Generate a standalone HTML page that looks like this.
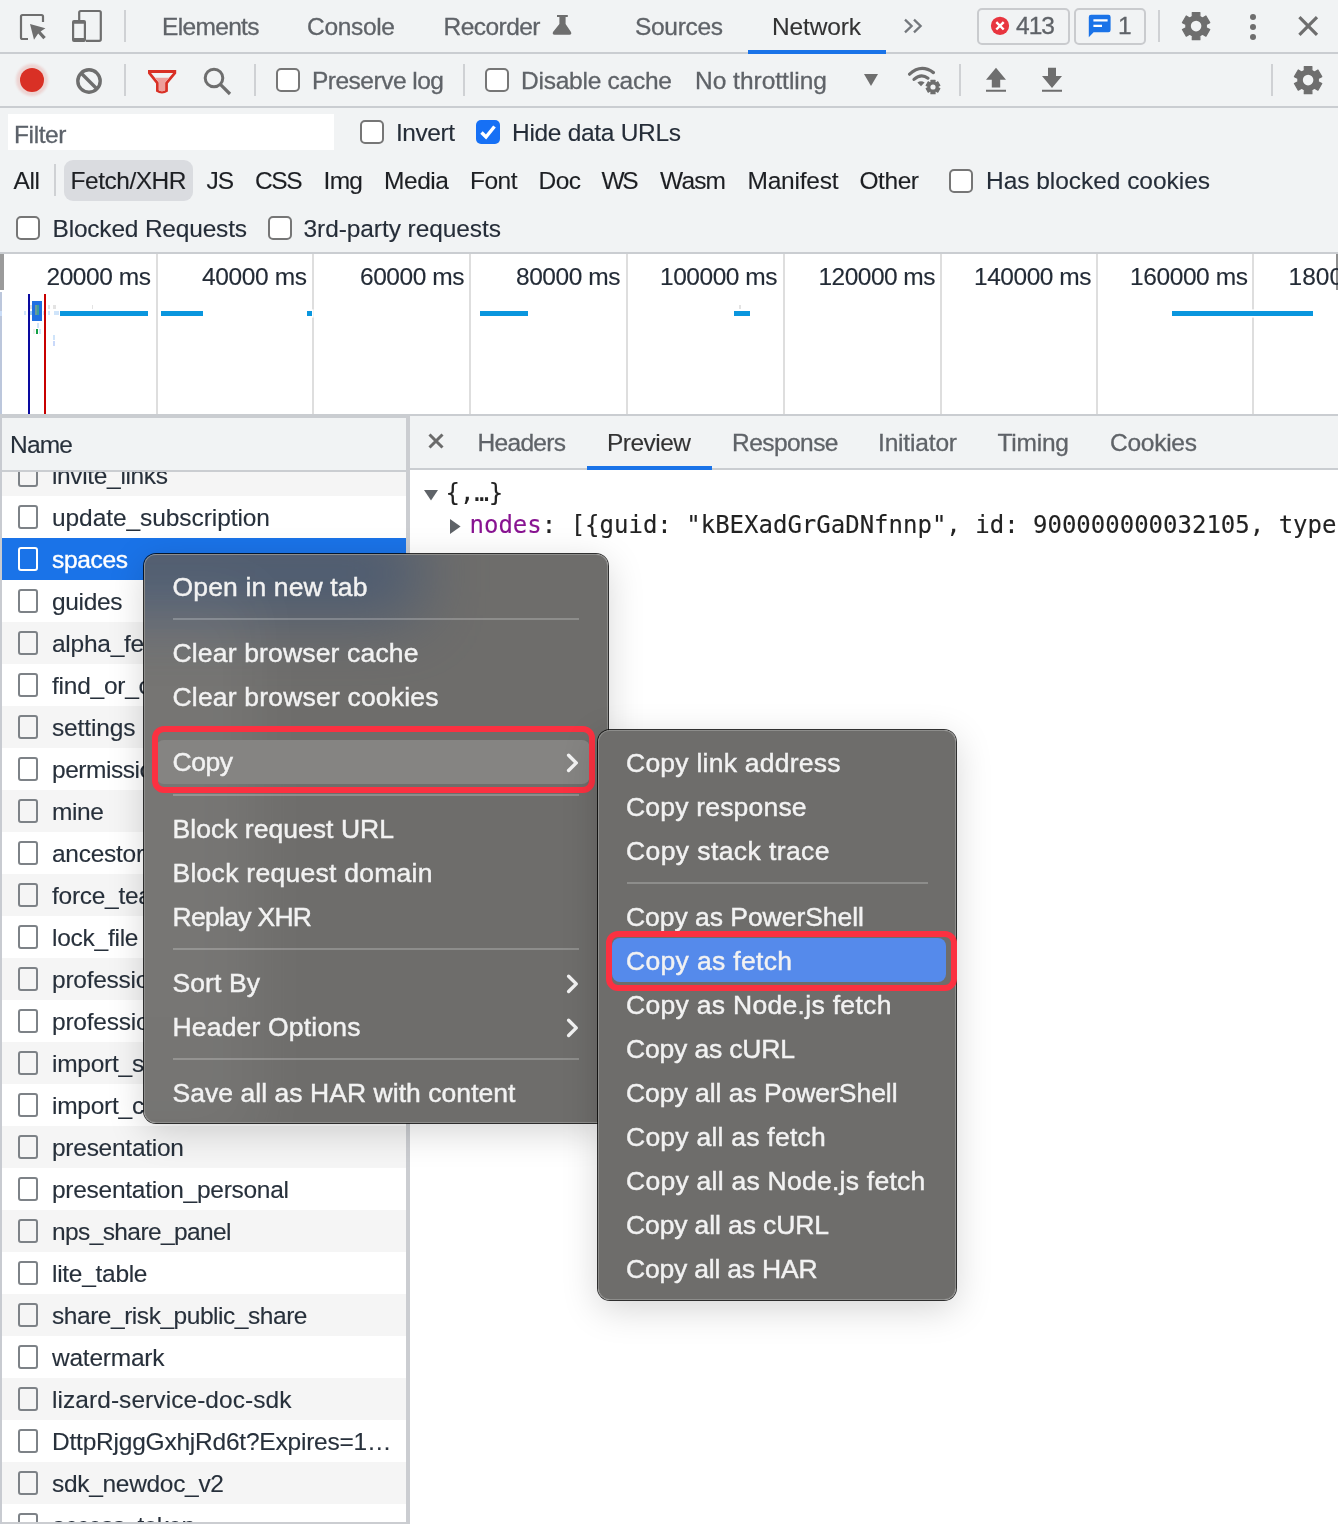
<!DOCTYPE html>
<html lang="en"><head><meta charset="utf-8"><title>DevTools - Network</title>
<style>
html,body{margin:0;padding:0}
body{width:1338px;height:1524px;position:relative;overflow:hidden;background:#fff;font-family:"Liberation Sans", sans-serif;}
#root{position:absolute;left:0;top:0;width:1338px;height:1524px;overflow:hidden;will-change:transform}
#root div,#root span,#root svg{position:absolute;box-sizing:border-box}
#root span{white-space:pre;line-height:1;-webkit-text-stroke:0.3px currentColor}
.m{font-family:"DejaVu Sans Mono", "Liberation Mono", monospace}
</style></head><body><div id="root">
<div style="left:0px;top:0px;width:1338px;height:254px;background:#f1f3f4;"></div>
<div style="left:0px;top:52px;width:1338px;height:2px;background:#cacdd1;"></div>
<div style="left:0px;top:106px;width:1338px;height:2px;background:#cacdd1;"></div>
<div style="left:0px;top:252px;width:1338px;height:2px;background:#cacdd1;"></div>
<div style="left:748px;top:50px;width:138px;height:4px;background:#1a73e8;"></div>
<div style="left:124px;top:10px;width:2px;height:32px;background:#cfd1d4;"></div>
<div style="left:1158px;top:10px;width:2px;height:32px;background:#cfd1d4;"></div>
<div style="left:124px;top:64px;width:2px;height:32px;background:#cfd1d4;"></div>
<div style="left:254px;top:64px;width:2px;height:32px;background:#cfd1d4;"></div>
<div style="left:463px;top:64px;width:2px;height:32px;background:#cfd1d4;"></div>
<div style="left:958.6px;top:64px;width:2px;height:32px;background:#cfd1d4;"></div>
<div style="left:1270.6px;top:64px;width:2px;height:32px;background:#cfd1d4;"></div>
<div style="left:8px;top:114px;width:326px;height:36px;background:#fff;"></div>
<div style="left:54px;top:164px;width:2px;height:32px;background:#cfd1d4;"></div>
<div style="left:64px;top:160px;width:128.8px;height:40.6px;background:#dadce0;border-radius:9px;"></div>
<div style="left:276px;top:68px;width:24px;height:24px;background:#fff;border:2px solid #767676;border-radius:5px;"></div>
<div style="left:484.6px;top:68px;width:24px;height:24px;background:#fff;border:2px solid #767676;border-radius:5px;"></div>
<div style="left:360px;top:120px;width:24px;height:24px;background:#fff;border:2px solid #767676;border-radius:5px;"></div>
<div style="left:949px;top:169px;width:24px;height:24px;background:#fff;border:2px solid #767676;border-radius:5px;"></div>
<div style="left:16px;top:216px;width:24px;height:24px;background:#fff;border:2px solid #767676;border-radius:5px;"></div>
<div style="left:268px;top:216px;width:24px;height:24px;background:#fff;border:2px solid #767676;border-radius:5px;"></div>
<div style="left:476px;top:120px;width:24px;height:24px;background:#1670f5;border-radius:5px;"></div>
<svg style="left:476px;top:120px" width="24" height="24" viewBox="0 0 24 24"><path d="M5.5 12.5 L10 17 L18.5 6.5" fill="none" stroke="#fff" stroke-width="3.4" stroke-linecap="butt" stroke-linejoin="miter"/></svg>
<div style="left:0px;top:254px;width:1338px;height:160px;background:#fff;"></div>
<div style="left:0px;top:414px;width:1338px;height:2px;background:#cacdd1;"></div>
<div style="left:155.5px;top:254px;width:2px;height:160px;background:#dedede;"></div>
<div style="left:312px;top:254px;width:2px;height:160px;background:#dedede;"></div>
<div style="left:469px;top:254px;width:2px;height:160px;background:#dedede;"></div>
<div style="left:625.5px;top:254px;width:2px;height:160px;background:#dedede;"></div>
<div style="left:782.5px;top:254px;width:2px;height:160px;background:#dedede;"></div>
<div style="left:939.5px;top:254px;width:2px;height:160px;background:#dedede;"></div>
<div style="left:1096px;top:254px;width:2px;height:160px;background:#dedede;"></div>
<div style="left:1252px;top:254px;width:2px;height:160px;background:#dedede;"></div>
<div style="left:1334px;top:254px;width:4px;height:60px;background:#fff;"></div>
<div style="left:1336px;top:254px;width:2px;height:36px;background:#8f8f8f;"></div>
<div style="left:0px;top:254px;width:4px;height:35.6px;background:#9b9b9b;"></div>
<div style="left:60px;top:310.5px;width:87.5px;height:5px;background:#0a96de;box-shadow:0 0 0 1.6px #fff;"></div>
<div style="left:161px;top:310.5px;width:41.5px;height:5px;background:#0a96de;box-shadow:0 0 0 1.6px #fff;"></div>
<div style="left:307px;top:310.5px;width:5px;height:5px;background:#0a96de;box-shadow:0 0 0 1.6px #fff;"></div>
<div style="left:480px;top:310.5px;width:47.5px;height:5px;background:#0a96de;box-shadow:0 0 0 1.6px #fff;"></div>
<div style="left:734px;top:310.5px;width:16px;height:5px;background:#0a96de;box-shadow:0 0 0 1.6px #fff;"></div>
<div style="left:1171.5px;top:310.5px;width:141.5px;height:5px;background:#0a96de;box-shadow:0 0 0 1.6px #fff;"></div>
<div style="left:0px;top:292px;width:2px;height:122px;background:#bcc7dc;"></div>
<div style="left:0px;top:311px;width:2px;height:4.5px;background:#c9dcf7;"></div>
<div style="left:32px;top:301px;width:10.2px;height:19.8px;background:#1f70e2;"></div>
<div style="left:35.4px;top:305px;width:1.2px;height:10px;background:#6a9a9c;"></div>
<div style="left:37px;top:305px;width:2px;height:10px;background:#3c9f9a;"></div>
<div style="left:24.2px;top:310.8px;width:2px;height:4.5px;background:#cfe4fa;"></div>
<div style="left:30.2px;top:310.8px;width:1.5px;height:4.5px;background:#9fd0f5;"></div>
<div style="left:42.5px;top:310.8px;width:1.5px;height:4.5px;background:#cfe4fa;"></div>
<div style="left:48px;top:310.8px;width:2px;height:4.5px;background:#cfe4fa;"></div>
<div style="left:54px;top:310.8px;width:1.6px;height:4.5px;background:#cfe4fa;"></div>
<div style="left:56.2px;top:310.8px;width:1.6px;height:4.5px;background:#cfe4fa;"></div>
<div style="left:58.2px;top:310.8px;width:1.2px;height:4.5px;background:#cfe4fa;"></div>
<div style="left:30px;top:304.5px;width:1.6px;height:4.5px;background:#e3e3e3;"></div>
<div style="left:48.4px;top:304.5px;width:1.6px;height:4.5px;background:#e3e3e3;"></div>
<div style="left:52.6px;top:304.5px;width:1.2px;height:4.5px;background:#e3e3e3;"></div>
<div style="left:54.2px;top:304.5px;width:1.4px;height:4.5px;background:#e3e3e3;"></div>
<div style="left:91.6px;top:304.5px;width:1.6px;height:4.5px;background:#e3e3e3;"></div>
<div style="left:37.2px;top:322.5px;width:2.2px;height:5.5px;background:#cfe4fa;"></div>
<div style="left:33.2px;top:329px;width:1.6px;height:4.5px;background:#eeeeee;"></div>
<div style="left:35.8px;top:329px;width:2.4px;height:4.5px;background:#12a043;"></div>
<div style="left:38.8px;top:329px;width:1.8px;height:4.5px;background:#cfe4fa;"></div>
<div style="left:53px;top:334.5px;width:2.4px;height:5px;background:#cfe4fa;"></div>
<div style="left:53px;top:340.5px;width:2.4px;height:5px;background:#c9d9fa;"></div>
<div style="left:739.2px;top:304.5px;width:1.4px;height:4.5px;background:#e3e3e3;"></div>
<div style="left:28px;top:294px;width:2px;height:120px;background:#0a0aa0;"></div>
<div style="left:44px;top:294px;width:2px;height:120px;background:#c80000;"></div>
<div style="left:406px;top:416px;width:4px;height:1108px;background:#cbcdd1;"></div>
<div style="left:0px;top:454px;width:406px;height:42px;background:#f5f5f5;"></div>
<div style="left:18px;top:463.3px;width:20px;height:23.5px;border:2px solid #7d8287;border-radius:3px;"></div>
<div style="left:0px;top:496px;width:406px;height:42px;background:#fff;"></div>
<div style="left:18px;top:505.3px;width:20px;height:23.5px;border:2px solid #7d8287;border-radius:3px;"></div>
<div style="left:0px;top:538px;width:406px;height:42px;background:#1a73e8;"></div>
<div style="left:18px;top:547.3px;width:20px;height:23.5px;border:2px solid #fff;border-radius:3px;"></div>
<div style="left:0px;top:580px;width:406px;height:42px;background:#fff;"></div>
<div style="left:18px;top:589.3px;width:20px;height:23.5px;border:2px solid #7d8287;border-radius:3px;"></div>
<div style="left:0px;top:622px;width:406px;height:42px;background:#f5f5f5;"></div>
<div style="left:18px;top:631.3px;width:20px;height:23.5px;border:2px solid #7d8287;border-radius:3px;"></div>
<div style="left:0px;top:664px;width:406px;height:42px;background:#fff;"></div>
<div style="left:18px;top:673.3px;width:20px;height:23.5px;border:2px solid #7d8287;border-radius:3px;"></div>
<div style="left:0px;top:706px;width:406px;height:42px;background:#f5f5f5;"></div>
<div style="left:18px;top:715.3px;width:20px;height:23.5px;border:2px solid #7d8287;border-radius:3px;"></div>
<div style="left:0px;top:748px;width:406px;height:42px;background:#fff;"></div>
<div style="left:18px;top:757.3px;width:20px;height:23.5px;border:2px solid #7d8287;border-radius:3px;"></div>
<div style="left:0px;top:790px;width:406px;height:42px;background:#f5f5f5;"></div>
<div style="left:18px;top:799.3px;width:20px;height:23.5px;border:2px solid #7d8287;border-radius:3px;"></div>
<div style="left:0px;top:832px;width:406px;height:42px;background:#fff;"></div>
<div style="left:18px;top:841.3px;width:20px;height:23.5px;border:2px solid #7d8287;border-radius:3px;"></div>
<div style="left:0px;top:874px;width:406px;height:42px;background:#f5f5f5;"></div>
<div style="left:18px;top:883.3px;width:20px;height:23.5px;border:2px solid #7d8287;border-radius:3px;"></div>
<div style="left:0px;top:916px;width:406px;height:42px;background:#fff;"></div>
<div style="left:18px;top:925.3px;width:20px;height:23.5px;border:2px solid #7d8287;border-radius:3px;"></div>
<div style="left:0px;top:958px;width:406px;height:42px;background:#f5f5f5;"></div>
<div style="left:18px;top:967.3px;width:20px;height:23.5px;border:2px solid #7d8287;border-radius:3px;"></div>
<div style="left:0px;top:1000px;width:406px;height:42px;background:#fff;"></div>
<div style="left:18px;top:1009.3px;width:20px;height:23.5px;border:2px solid #7d8287;border-radius:3px;"></div>
<div style="left:0px;top:1042px;width:406px;height:42px;background:#f5f5f5;"></div>
<div style="left:18px;top:1051.3px;width:20px;height:23.5px;border:2px solid #7d8287;border-radius:3px;"></div>
<div style="left:0px;top:1084px;width:406px;height:42px;background:#fff;"></div>
<div style="left:18px;top:1093.3px;width:20px;height:23.5px;border:2px solid #7d8287;border-radius:3px;"></div>
<div style="left:0px;top:1126px;width:406px;height:42px;background:#f5f5f5;"></div>
<div style="left:18px;top:1135.3px;width:20px;height:23.5px;border:2px solid #7d8287;border-radius:3px;"></div>
<div style="left:0px;top:1168px;width:406px;height:42px;background:#fff;"></div>
<div style="left:18px;top:1177.3px;width:20px;height:23.5px;border:2px solid #7d8287;border-radius:3px;"></div>
<div style="left:0px;top:1210px;width:406px;height:42px;background:#f5f5f5;"></div>
<div style="left:18px;top:1219.3px;width:20px;height:23.5px;border:2px solid #7d8287;border-radius:3px;"></div>
<div style="left:0px;top:1252px;width:406px;height:42px;background:#fff;"></div>
<div style="left:18px;top:1261.3px;width:20px;height:23.5px;border:2px solid #7d8287;border-radius:3px;"></div>
<div style="left:0px;top:1294px;width:406px;height:42px;background:#f5f5f5;"></div>
<div style="left:18px;top:1303.3px;width:20px;height:23.5px;border:2px solid #7d8287;border-radius:3px;"></div>
<div style="left:0px;top:1336px;width:406px;height:42px;background:#fff;"></div>
<div style="left:18px;top:1345.3px;width:20px;height:23.5px;border:2px solid #7d8287;border-radius:3px;"></div>
<div style="left:0px;top:1378px;width:406px;height:42px;background:#f5f5f5;"></div>
<div style="left:18px;top:1387.3px;width:20px;height:23.5px;border:2px solid #7d8287;border-radius:3px;"></div>
<div style="left:0px;top:1420px;width:406px;height:42px;background:#fff;"></div>
<div style="left:18px;top:1429.3px;width:20px;height:23.5px;border:2px solid #7d8287;border-radius:3px;"></div>
<div style="left:0px;top:1462px;width:406px;height:42px;background:#f5f5f5;"></div>
<div style="left:18px;top:1471.3px;width:20px;height:23.5px;border:2px solid #7d8287;border-radius:3px;"></div>
<div style="left:0px;top:1504px;width:406px;height:42px;background:#fff;"></div>
<div style="left:18px;top:1513.3px;width:20px;height:23.5px;border:2px solid #7d8287;border-radius:3px;"></div>
<div style="left:0px;top:418px;width:2px;height:1106px;background:#c8cbd1;z-index:4;"></div>
<div style="left:0px;top:1522px;width:410px;height:2px;background:#cbcdd1;z-index:3;"></div>
<div style="left:0px;top:414px;width:406px;height:4px;background:#cacdd1;z-index:3;"></div>
<div style="left:0px;top:418px;width:406px;height:52px;background:#f1f3f4;z-index:3;"></div>
<div style="left:0px;top:470px;width:406px;height:2px;background:#cacdd1;z-index:3;"></div>
<div style="left:410px;top:416px;width:928px;height:52px;background:#f1f3f4;"></div>
<div style="left:410px;top:468px;width:928px;height:2px;background:#cacdd1;"></div>
<div style="left:410px;top:470px;width:928px;height:1054px;background:#fff;"></div>
<svg style="left:427px;top:432px" width="18" height="18" viewBox="0 0 18 18"><path d="M2.5 2.5 L15.5 15.5 M15.5 2.5 L2.5 15.5" stroke="#6b6b6b" stroke-width="3" fill="none"/></svg>
<div style="left:587px;top:466px;width:125px;height:4px;background:#1a73e8;"></div>
<svg style="left:424px;top:490px" width="14" height="11" viewBox="0 0 14 11"><path d="M0 0 H14 L7 10.6 Z" fill="#5f6368"/></svg>
<svg style="left:450px;top:518.5px" width="11" height="15" viewBox="0 0 11 15"><path d="M0 0 L10.6 7.5 L0 15 Z" fill="#5f6368"/></svg>
<svg style="left:16px;top:10px" width="34" height="34" viewBox="16 10 34 34"><path d="M28 39 H22.5 Q21 39 21 37.5 V16.5 Q21 15 22.5 15 H41.5 Q43 15 43 16.5 V22" fill="none" stroke="#6e6e6e" stroke-width="2.2"/><path d="M30 24 L45.4 28.3 L40.6 31.4 L45.8 37 L43.3 39.3 L38.2 33.6 L34 39.8 Z" fill="#6e6e6e"/></svg>
<svg style="left:70px;top:8px" width="34" height="36" viewBox="70 8 34 36"><path d="M79.2 20 V12.5 Q79.2 11 80.7 11 H99.3 Q100.8 11 100.8 12.5 V39.3 Q100.8 40.8 99.3 40.8 H86" fill="none" stroke="#6e6e6e" stroke-width="2.2"/><path d="M74 20 H84 Q86 20 86 22 V40 Q86 42 84 42 H74 Q72 42 72 40 V22 Q72 20 74 20 Z M74.2 23.8 V38 H83.8 V23.8 Z" fill="#6e6e6e" fill-rule="evenodd"/></svg>
<div style="left:16px;top:64px;width:32px;height:32px;border-radius:50%;background:rgba(217,48,37,0.16);filter:blur(1.2px)"></div>
<div style="left:20px;top:68px;width:24px;height:24px;border-radius:50%;background:#d93025"></div>
<svg style="left:74px;top:66px" width="30" height="30" viewBox="74 66 30 30"><circle cx="89" cy="81" r="11.2" fill="none" stroke="#6e6e6e" stroke-width="3.4"/><path d="M81 73 L97 89" stroke="#6e6e6e" stroke-width="3.4"/></svg>
<svg style="left:146px;top:68px" width="32" height="28" viewBox="146 68 32 28"><path d="M148 70 H176.2 V73.5 L167.9 83.5 V91.5 Q162 95.6 156 91.5 V83.5 L148 73.5 Z" fill="#d93025"/><path d="M151.1 72.9 H173.1 L165.1 82.5 V90.3 Q162 92 158.8 90.3 V82.5 Z" fill="#f1f3f4"/><path d="M155 77.8 H169.2 L165.1 82.5 V90.3 Q162 92 158.8 90.3 V82.5 Z" fill="#ee9f9b"/></svg>
<svg style="left:200px;top:64px" width="34" height="34" viewBox="200 64 34 34"><circle cx="214" cy="78" r="8.8" fill="none" stroke="#6e6e6e" stroke-width="3"/><path d="M220.6 84.6 L230 94" stroke="#6e6e6e" stroke-width="3.2"/></svg>
<svg style="left:550px;top:12px" width="24" height="26" viewBox="550 12 24 26"><path d="M557 15 H567.8 V17 H565.6 V24 L571 32 Q572 34.8 569.5 34.8 H554.5 Q552 34.8 553 32 L559.4 24 V17 H557 Z" fill="#6e6e6e"/></svg>
<svg style="left:900px;top:14px" width="26" height="24" viewBox="900 14 26 24"><path d="M905 19.6 L911.6 26 L905 32.4 M914 19.6 L920.6 26 L914 32.4" fill="none" stroke="#73777c" stroke-width="2.3"/></svg>
<div style="left:977px;top:8px;width:92.5px;height:36.5px;border:2px solid #c9cbce;border-radius:5px;"></div>
<svg style="left:990px;top:16px" width="20" height="20" viewBox="990 16 20 20"><circle cx="1000" cy="25.8" r="9.1" fill="#e8353f"/><path d="M996.3 22.1 L1003.7 29.5 M1003.7 22.1 L996.3 29.5" stroke="#fff" stroke-width="2.4"/></svg>
<div style="left:1074.3px;top:8px;width:71.7px;height:36.5px;border:2px solid #c9cbce;border-radius:5px;"></div>
<svg style="left:1086px;top:12px" width="28" height="28" viewBox="1086 12 28 28"><path d="M1091 14.7 H1108.4 Q1110.6 14.7 1110.6 16.9 V30.1 Q1110.6 32.3 1108.4 32.3 H1093.6 L1088.8 37.3 V16.9 Q1088.8 14.7 1091 14.7 Z" fill="#1a73e8"/><path d="M1093.4 20.3 H1107.6 M1093.4 25.8 H1102" stroke="#fff" stroke-width="2.2"/></svg>
<svg style="left:1179.9px;top:9.9px" width="32.2" height="32.2" viewBox="1179.90 9.90 32.20 32.20"><circle cx="1196" cy="26" r="10.3" fill="#6e6e6e"/><path d="M1192.26 16.40 L1192.17 12.43 L1199.83 12.43 L1199.74 16.40 L1202.44 17.96 L1205.84 15.90 L1209.67 22.53 L1206.18 24.44 L1206.18 27.56 L1209.67 29.47 L1205.84 36.10 L1202.44 34.04 L1199.74 35.60 L1199.83 39.57 L1192.17 39.57 L1192.26 35.60 L1189.56 34.04 L1186.16 36.10 L1182.33 29.47 L1185.82 27.56 L1185.82 24.44 L1182.33 22.53 L1186.16 15.90 L1189.56 17.96 Z M1201.30 26.00 A5.3 5.3 0 1 0 1190.70 26.00 A5.3 5.3 0 1 0 1201.30 26.00 Z" fill="#6e6e6e" fill-rule="evenodd" stroke="#6e6e6e" stroke-width="1.2" stroke-linejoin="round"/><circle cx="1196" cy="26" r="5.3" fill="#f1f3f4"/></svg>
<svg style="left:1291.9px;top:63.9px" width="32.2" height="32.2" viewBox="1291.90 63.90 32.20 32.20"><circle cx="1308" cy="80" r="10.3" fill="#6e6e6e"/><path d="M1304.26 70.40 L1304.17 66.43 L1311.83 66.43 L1311.74 70.40 L1314.44 71.96 L1317.84 69.90 L1321.67 76.53 L1318.18 78.44 L1318.18 81.56 L1321.67 83.47 L1317.84 90.10 L1314.44 88.04 L1311.74 89.60 L1311.83 93.57 L1304.17 93.57 L1304.26 89.60 L1301.56 88.04 L1298.16 90.10 L1294.33 83.47 L1297.82 81.56 L1297.82 78.44 L1294.33 76.53 L1298.16 69.90 L1301.56 71.96 Z M1313.30 80.00 A5.3 5.3 0 1 0 1302.70 80.00 A5.3 5.3 0 1 0 1313.30 80.00 Z" fill="#6e6e6e" fill-rule="evenodd" stroke="#6e6e6e" stroke-width="1.2" stroke-linejoin="round"/><circle cx="1308" cy="80" r="5.3" fill="#f1f3f4"/></svg>
<div style="left:1250px;top:14px;width:6px;height:6px;border-radius:50%;background:#6e6e6e"></div>
<div style="left:1250px;top:24px;width:6px;height:6px;border-radius:50%;background:#6e6e6e"></div>
<div style="left:1250px;top:34px;width:6px;height:6px;border-radius:50%;background:#6e6e6e"></div>
<svg style="left:1296px;top:14px" width="24" height="24" viewBox="1296 14 24 24"><path d="M1299.4 17.2 L1317 34.8 M1317 17.2 L1299.4 34.8" stroke="#6e6e6e" stroke-width="3.2" fill="none"/></svg>
<svg style="left:862px;top:72px" width="18" height="16" viewBox="862 72 18 16"><path d="M864 74 H878 L871 86 Z" fill="#6e6e6e"/></svg>
<svg style="left:904px;top:62px" width="40" height="36" viewBox="904 62 40 36"><path d="M909.6 74.2 Q921 63.6 933.4 72.6" fill="none" stroke="#6e6e6e" stroke-width="3.2" stroke-linecap="round"/><path d="M914 79.4 Q921 73.2 928 78.2" fill="none" stroke="#6e6e6e" stroke-width="3.2" stroke-linecap="round"/><path d="M917.4 82.6 Q921 80 924.6 82.6 L921 86.2 Z" fill="#6e6e6e"/></svg>
<div style="left:924.6px;top:77.9px;width:17.6px;height:17.6px;border-radius:50%;background:#f1f3f4"></div>
<svg style="left:924.4px;top:77.7px" width="18" height="18" viewBox="924.40 77.70 18.00 18.00"><circle cx="933.4" cy="86.7" r="5.0" fill="#6e6e6e"/><path d="M931.43 82.10 L931.33 80.01 L935.47 80.01 L935.37 82.10 L936.39 82.70 L938.16 81.56 L940.23 85.15 L938.36 86.11 L938.36 87.29 L940.23 88.25 L938.16 91.84 L936.39 90.70 L935.37 91.30 L935.47 93.39 L931.33 93.39 L931.43 91.30 L930.41 90.70 L928.64 91.84 L926.57 88.25 L928.44 87.29 L928.44 86.11 L926.57 85.15 L928.64 81.56 L930.41 82.70 Z M936.00 86.70 A2.6 2.6 0 1 0 930.80 86.70 A2.6 2.6 0 1 0 936.00 86.70 Z" fill="#6e6e6e" fill-rule="evenodd" stroke="#6e6e6e" stroke-width="1.2" stroke-linejoin="round"/><circle cx="933.4" cy="86.7" r="2.6" fill="#f1f3f4"/></svg>
<svg style="left:984px;top:64px" width="24" height="30" viewBox="984 64 24 30"><path d="M996 67.8 L1006 79.8 H1000.2 V87.5 H991.8 V79.8 H986 Z M986 89.8 H1006 V91.8 H986 Z" fill="#6e6e6e"/></svg>
<svg style="left:1040px;top:64px" width="24" height="30" viewBox="1040 64 24 30"><path d="M1048 67.8 H1056 V76 H1062 L1052 88 L1042 76 H1048 Z M1042 89.8 H1062 V91.8 H1042 Z" fill="#6e6e6e"/></svg>
<div style="left:144px;top:554px;width:463.5px;height:569px;border-radius:12px;z-index:10;box-shadow:0 0 0 1px rgba(0,0,0,0.8), 0 9px 36px rgba(0,0,0,0.17);"></div>
<div style="left:144px;top:554px;width:463.5px;height:569px;border-radius:12px;z-index:10;background:#6e6d6b;overflow:hidden;border:1px solid rgba(255,255,255,0.22);"><div style="left:-150px;top:-24px;width:424px;height:84px;background:#2f4c78;filter:blur(32px);opacity:0.55"></div><div style="left:-150px;top:30px;width:262px;height:560px;background:#fff;filter:blur(30px);opacity:0.06"></div></div>
<div style="left:156px;top:739.8px;width:434px;height:44.4px;background:#858482;z-index:11;border-radius:8px;"></div>
<div style="left:172.5px;top:618px;width:406.5px;height:2px;background:rgba(255,255,255,0.22);z-index:11;"></div>
<div style="left:172.5px;top:727px;width:406.5px;height:2px;background:rgba(255,255,255,0.22);z-index:11;"></div>
<div style="left:172.5px;top:794px;width:406.5px;height:2px;background:rgba(255,255,255,0.22);z-index:11;"></div>
<div style="left:172.5px;top:948px;width:406.5px;height:2px;background:rgba(255,255,255,0.22);z-index:11;"></div>
<div style="left:172.5px;top:1058px;width:406.5px;height:2px;background:rgba(255,255,255,0.22);z-index:11;"></div>
<svg style="left:564px;top:751px;z-index:12" width="16" height="22" viewBox="0 0 16 22"><path d="M4.6 4.3 L12.3 11.9 L4.6 19.5" fill="none" stroke="#f2f2f2" stroke-width="3.4" stroke-linecap="round" stroke-linejoin="round"/></svg>
<svg style="left:564px;top:972px;z-index:12" width="16" height="22" viewBox="0 0 16 22"><path d="M4.6 4.3 L12.3 11.9 L4.6 19.5" fill="none" stroke="#f2f2f2" stroke-width="3.4" stroke-linecap="round" stroke-linejoin="round"/></svg>
<svg style="left:564px;top:1016px;z-index:12" width="16" height="22" viewBox="0 0 16 22"><path d="M4.6 4.3 L12.3 11.9 L4.6 19.5" fill="none" stroke="#f2f2f2" stroke-width="3.4" stroke-linecap="round" stroke-linejoin="round"/></svg>
<div style="left:151.5px;top:726px;width:443.5px;height:67.4px;border:6px solid #fb3141;border-radius:12px;z-index:13;"></div>
<div style="left:598px;top:730px;width:357.8px;height:570px;border-radius:12px;z-index:20;box-shadow:0 0 0 1px rgba(0,0,0,0.8), 0 9px 36px rgba(0,0,0,0.17);"></div>
<div style="left:598px;top:730px;width:357.8px;height:570px;border-radius:12px;z-index:20;background:#6e6d6b;overflow:hidden;border:1px solid rgba(255,255,255,0.22);"></div>
<div style="left:611.5px;top:937.8px;width:334.8px;height:44.3px;background:#558aeb;z-index:21;border-radius:8px;"></div>
<div style="left:626.5px;top:881.5px;width:301.5px;height:2px;background:rgba(255,255,255,0.22);z-index:21;"></div>
<div style="left:605.9px;top:930.9px;width:350.7px;height:60.2px;border:6px solid #fb3141;border-radius:12px;z-index:23;"></div>
<span style="left:162px;top:15px;font-size:24.5px;color:#5f6368;letter-spacing:-0.663px;">Elements</span>
<span style="left:307px;top:15px;font-size:24.5px;color:#5f6368;letter-spacing:-0.315px;">Console</span>
<span style="left:443.5px;top:15px;font-size:24.5px;color:#5f6368;letter-spacing:-0.538px;">Recorder</span>
<span style="left:635px;top:15px;font-size:24.5px;color:#5f6368;letter-spacing:-0.315px;">Sources</span>
<span style="left:772px;top:15px;font-size:24.5px;color:#333;letter-spacing:-0.143px;-webkit-text-stroke-width:0.12px;">Network</span>
<span style="left:312px;top:69px;font-size:24.5px;color:#5f6368;letter-spacing:-0.504px;">Preserve log</span>
<span style="left:521px;top:69px;font-size:24.5px;color:#5f6368;letter-spacing:-0.241px;">Disable cache</span>
<span style="left:695px;top:69px;font-size:24.5px;color:#5f6368;letter-spacing:-0.009px;">No throttling</span>
<span style="left:14px;top:123px;font-size:24.5px;color:#5c626a;letter-spacing:-0.391px;">Filter</span>
<span style="left:396px;top:121px;font-size:24.5px;color:#252d38;letter-spacing:-0.456px;-webkit-text-stroke-width:0.12px;">Invert</span>
<span style="left:512px;top:121px;font-size:24.5px;color:#252d38;letter-spacing:-0.304px;-webkit-text-stroke-width:0.12px;">Hide data URLs</span>
<span style="left:13.5px;top:169px;font-size:24.5px;color:#1d1f23;letter-spacing:-0.367px;-webkit-text-stroke-width:0.12px;">All</span>
<span style="left:70.5px;top:169px;font-size:24.5px;color:#1d1f23;letter-spacing:-0.477px;-webkit-text-stroke-width:0.12px;">Fetch/XHR</span>
<span style="left:206.5px;top:169px;font-size:24.5px;color:#1d1f23;letter-spacing:-1.094px;-webkit-text-stroke-width:0.12px;">JS</span>
<span style="left:255px;top:169px;font-size:24.5px;color:#1d1f23;letter-spacing:-1.445px;-webkit-text-stroke-width:0.12px;">CSS</span>
<span style="left:323.5px;top:169px;font-size:24.5px;color:#1d1f23;letter-spacing:-0.672px;-webkit-text-stroke-width:0.12px;">Img</span>
<span style="left:384px;top:169px;font-size:24.5px;color:#1d1f23;letter-spacing:-0.434px;-webkit-text-stroke-width:0.12px;">Media</span>
<span style="left:470px;top:169px;font-size:24.5px;color:#1d1f23;letter-spacing:-0.510px;-webkit-text-stroke-width:0.12px;">Font</span>
<span style="left:538.5px;top:169px;font-size:24.5px;color:#1d1f23;letter-spacing:-0.539px;-webkit-text-stroke-width:0.12px;">Doc</span>
<span style="left:601.5px;top:169px;font-size:24.5px;color:#1d1f23;letter-spacing:-2.469px;-webkit-text-stroke-width:0.12px;">WS</span>
<span style="left:660px;top:169px;font-size:24.5px;color:#1d1f23;letter-spacing:-0.833px;-webkit-text-stroke-width:0.12px;">Wasm</span>
<span style="left:747.5px;top:169px;font-size:24.5px;color:#1d1f23;letter-spacing:-0.228px;-webkit-text-stroke-width:0.12px;">Manifest</span>
<span style="left:859.5px;top:169px;font-size:24.5px;color:#1d1f23;letter-spacing:-0.445px;-webkit-text-stroke-width:0.12px;">Other</span>
<span style="left:986px;top:169px;font-size:24.5px;color:#252d38;letter-spacing:-0.039px;-webkit-text-stroke-width:0.12px;">Has blocked cookies</span>
<span style="left:52.5px;top:217px;font-size:24.5px;color:#252d38;letter-spacing:-0.199px;-webkit-text-stroke-width:0.12px;">Blocked Requests</span>
<span style="left:303.5px;top:217px;font-size:24.5px;color:#252d38;letter-spacing:-0.077px;-webkit-text-stroke-width:0.12px;">3rd-party requests</span>
<span style="left:46.5px;top:265px;font-size:24.5px;color:#232b36;letter-spacing:-0.444px;-webkit-text-stroke-width:0.12px;">20000 ms</span>
<span style="left:202px;top:265px;font-size:24.5px;color:#232b36;letter-spacing:-0.373px;-webkit-text-stroke-width:0.12px;">40000 ms</span>
<span style="left:360px;top:265px;font-size:24.5px;color:#232b36;letter-spacing:-0.444px;-webkit-text-stroke-width:0.12px;">60000 ms</span>
<span style="left:516px;top:265px;font-size:24.5px;color:#232b36;letter-spacing:-0.444px;-webkit-text-stroke-width:0.12px;">80000 ms</span>
<span style="left:660px;top:265px;font-size:24.5px;color:#232b36;letter-spacing:-0.467px;-webkit-text-stroke-width:0.12px;">100000 ms</span>
<span style="left:818.5px;top:265px;font-size:24.5px;color:#232b36;letter-spacing:-0.529px;-webkit-text-stroke-width:0.12px;">120000 ms</span>
<span style="left:974px;top:265px;font-size:24.5px;color:#232b36;letter-spacing:-0.467px;-webkit-text-stroke-width:0.12px;">140000 ms</span>
<span style="left:1130px;top:265px;font-size:24.5px;color:#232b36;letter-spacing:-0.404px;-webkit-text-stroke-width:0.12px;">160000 ms</span>
<span style="left:1288.5px;top:265px;font-size:24.5px;color:#232b36;-webkit-text-stroke-width:0.12px;">1800</span>
<span style="left:52px;top:464px;font-size:24.5px;color:#27303b;letter-spacing:-0.349px;-webkit-text-stroke-width:0.12px;">invite_links</span>
<span style="left:52px;top:506px;font-size:24.5px;color:#27303b;letter-spacing:-0.072px;-webkit-text-stroke-width:0.12px;">update_subscription</span>
<span style="left:52px;top:548px;font-size:24.5px;color:#fff;letter-spacing:-0.328px;-webkit-text-stroke-width:0.4px;">spaces</span>
<span style="left:52px;top:590px;font-size:24.5px;color:#27303b;letter-spacing:-0.341px;-webkit-text-stroke-width:0.12px;">guides</span>
<span style="left:52px;top:632px;font-size:24.5px;color:#27303b;letter-spacing:-0.255px;-webkit-text-stroke-width:0.12px;">alpha_features</span>
<span style="left:52px;top:674px;font-size:24.5px;color:#27303b;letter-spacing:-0.249px;-webkit-text-stroke-width:0.12px;">find_or_create</span>
<span style="left:52px;top:716px;font-size:24.5px;color:#27303b;letter-spacing:-0.134px;-webkit-text-stroke-width:0.12px;">settings</span>
<span style="left:52px;top:758px;font-size:24.5px;color:#27303b;letter-spacing:-0.463px;-webkit-text-stroke-width:0.12px;">permission</span>
<span style="left:52px;top:800px;font-size:24.5px;color:#27303b;letter-spacing:-0.370px;-webkit-text-stroke-width:0.12px;">mine</span>
<span style="left:52px;top:842px;font-size:24.5px;color:#27303b;letter-spacing:-0.265px;-webkit-text-stroke-width:0.12px;">ancestors</span>
<span style="left:52px;top:884px;font-size:24.5px;color:#27303b;letter-spacing:-0.274px;-webkit-text-stroke-width:0.12px;">force_team</span>
<span style="left:52px;top:926px;font-size:24.5px;color:#27303b;letter-spacing:-0.252px;-webkit-text-stroke-width:0.12px;">lock_file</span>
<span style="left:52px;top:968px;font-size:24.5px;color:#27303b;letter-spacing:-0.246px;-webkit-text-stroke-width:0.12px;">professional</span>
<span style="left:52px;top:1010px;font-size:24.5px;color:#27303b;letter-spacing:-0.233px;-webkit-text-stroke-width:0.12px;">professional_info</span>
<span style="left:52px;top:1052px;font-size:24.5px;color:#27303b;letter-spacing:-0.247px;-webkit-text-stroke-width:0.12px;">import_status</span>
<span style="left:52px;top:1094px;font-size:24.5px;color:#27303b;letter-spacing:-0.248px;-webkit-text-stroke-width:0.12px;">import_config</span>
<span style="left:52px;top:1136px;font-size:24.5px;color:#27303b;letter-spacing:-0.260px;-webkit-text-stroke-width:0.12px;">presentation</span>
<span style="left:52px;top:1178px;font-size:24.5px;color:#27303b;letter-spacing:-0.273px;-webkit-text-stroke-width:0.12px;">presentation_personal</span>
<span style="left:52px;top:1220px;font-size:24.5px;color:#27303b;letter-spacing:-0.607px;-webkit-text-stroke-width:0.12px;">nps_share_panel</span>
<span style="left:52px;top:1262px;font-size:24.5px;color:#27303b;letter-spacing:-0.286px;-webkit-text-stroke-width:0.12px;">lite_table</span>
<span style="left:52px;top:1304px;font-size:24.5px;color:#27303b;letter-spacing:-0.458px;-webkit-text-stroke-width:0.12px;">share_risk_public_share</span>
<span style="left:52px;top:1346px;font-size:24.5px;color:#27303b;letter-spacing:-0.232px;-webkit-text-stroke-width:0.12px;">watermark</span>
<span style="left:52px;top:1388px;font-size:24.5px;color:#27303b;letter-spacing:0.059px;-webkit-text-stroke-width:0.12px;">lizard-service-doc-sdk</span>
<span style="left:52px;top:1430px;font-size:24.5px;color:#27303b;letter-spacing:-0.219px;-webkit-text-stroke-width:0.12px;">DttpRjggGxhjRd6t?Expires=1…</span>
<span style="left:52px;top:1472px;font-size:24.5px;color:#27303b;letter-spacing:-0.309px;-webkit-text-stroke-width:0.12px;">sdk_newdoc_v2</span>
<span style="left:52px;top:1514px;font-size:24.5px;color:#27303b;letter-spacing:-0.619px;-webkit-text-stroke-width:0.12px;">access_token</span>
<span style="left:10px;top:433px;font-size:24.5px;color:#27303b;letter-spacing:-0.786px;z-index:4;-webkit-text-stroke-width:0.12px;">Name</span>
<span style="left:477.5px;top:431px;font-size:24.5px;color:#5f6368;letter-spacing:-0.685px;">Headers</span>
<span style="left:607px;top:431px;font-size:24.5px;color:#333;letter-spacing:-0.523px;-webkit-text-stroke-width:0.12px;">Preview</span>
<span style="left:732px;top:431px;font-size:24.5px;color:#5f6368;letter-spacing:-0.547px;">Response</span>
<span style="left:878px;top:431px;font-size:24.5px;color:#5f6368;letter-spacing:-0.168px;">Initiator</span>
<span style="left:997.5px;top:431px;font-size:24.5px;color:#5f6368;letter-spacing:-0.222px;">Timing</span>
<span style="left:1110px;top:431px;font-size:24.5px;color:#5f6368;letter-spacing:-0.253px;">Cookies</span>
<span class="m" style="left:445.5px;top:481px;font-size:24px;color:#222;-webkit-text-stroke-width:0.12px;">{,…}</span>
<span class="m" style="left:469.5px;top:513px;font-size:24px;color:#881391;-webkit-text-stroke-width:0.12px;">nodes</span>
<span class="m" style="left:541.75px;top:513px;font-size:24px;color:#222;-webkit-text-stroke-width:0.12px;">: [{guid: "kBEXadGrGaDNfnnp", id: 900000000032105, type</span>
<span style="left:1016px;top:14px;font-size:24.5px;color:#5f6368;letter-spacing:-0.945px;">413</span>
<span style="left:1118px;top:14px;font-size:24.5px;color:#5f6368;">1</span>
<span style="left:172.5px;top:574px;font-size:26.5px;color:#f2f2f2;letter-spacing:0.143px;z-index:12;-webkit-text-stroke-width:0.45px;">Open in new tab</span>
<span style="left:172.5px;top:640px;font-size:26.5px;color:#f2f2f2;letter-spacing:0.165px;z-index:12;-webkit-text-stroke-width:0.45px;">Clear browser cache</span>
<span style="left:172.5px;top:684px;font-size:26.5px;color:#f2f2f2;letter-spacing:0.192px;z-index:12;-webkit-text-stroke-width:0.45px;">Clear browser cookies</span>
<span style="left:172.5px;top:749px;font-size:26.5px;color:#f2f2f2;letter-spacing:-0.458px;z-index:12;-webkit-text-stroke-width:0.45px;">Copy</span>
<span style="left:172.5px;top:816px;font-size:26.5px;color:#f2f2f2;letter-spacing:0.035px;z-index:12;-webkit-text-stroke-width:0.45px;">Block request URL</span>
<span style="left:172.5px;top:860px;font-size:26.5px;color:#f2f2f2;letter-spacing:0.271px;z-index:12;-webkit-text-stroke-width:0.45px;">Block request domain</span>
<span style="left:172.5px;top:904px;font-size:26.5px;color:#f2f2f2;letter-spacing:-0.701px;z-index:12;-webkit-text-stroke-width:0.45px;">Replay XHR</span>
<span style="left:172.5px;top:970px;font-size:26.5px;color:#f2f2f2;letter-spacing:0.102px;z-index:12;-webkit-text-stroke-width:0.45px;">Sort By</span>
<span style="left:172.5px;top:1014px;font-size:26.5px;color:#f2f2f2;letter-spacing:0.184px;z-index:12;-webkit-text-stroke-width:0.45px;">Header Options</span>
<span style="left:172.5px;top:1080px;font-size:26.5px;color:#f2f2f2;letter-spacing:0.047px;z-index:12;-webkit-text-stroke-width:0.45px;">Save all as HAR with content</span>
<span style="left:626px;top:750px;font-size:26.5px;color:#f2f2f2;letter-spacing:0.241px;z-index:22;-webkit-text-stroke-width:0.45px;">Copy link address</span>
<span style="left:626px;top:794px;font-size:26.5px;color:#f2f2f2;letter-spacing:0.196px;z-index:22;-webkit-text-stroke-width:0.45px;">Copy response</span>
<span style="left:626px;top:838px;font-size:26.5px;color:#f2f2f2;letter-spacing:0.409px;z-index:22;-webkit-text-stroke-width:0.45px;">Copy stack trace</span>
<span style="left:626px;top:904px;font-size:26.5px;color:#f2f2f2;letter-spacing:-0.037px;z-index:22;-webkit-text-stroke-width:0.45px;">Copy as PowerShell</span>
<span style="left:626px;top:948px;font-size:26.5px;color:#f2f2f2;letter-spacing:0.331px;z-index:22;-webkit-text-stroke-width:0.45px;">Copy as fetch</span>
<span style="left:626px;top:992px;font-size:26.5px;color:#f2f2f2;letter-spacing:0.307px;z-index:22;-webkit-text-stroke-width:0.45px;">Copy as Node.js fetch</span>
<span style="left:626px;top:1036px;font-size:26.5px;color:#f2f2f2;letter-spacing:-0.168px;z-index:22;-webkit-text-stroke-width:0.45px;">Copy as cURL</span>
<span style="left:626px;top:1080px;font-size:26.5px;color:#f2f2f2;letter-spacing:-0.043px;z-index:22;-webkit-text-stroke-width:0.45px;">Copy all as PowerShell</span>
<span style="left:626px;top:1124px;font-size:26.5px;color:#f2f2f2;letter-spacing:0.243px;z-index:22;-webkit-text-stroke-width:0.45px;">Copy all as fetch</span>
<span style="left:626px;top:1168px;font-size:26.5px;color:#f2f2f2;letter-spacing:0.257px;z-index:22;-webkit-text-stroke-width:0.45px;">Copy all as Node.js fetch</span>
<span style="left:626px;top:1212px;font-size:26.5px;color:#f2f2f2;letter-spacing:-0.121px;z-index:22;-webkit-text-stroke-width:0.45px;">Copy all as cURL</span>
<span style="left:626px;top:1256px;font-size:26.5px;color:#f2f2f2;letter-spacing:-0.200px;z-index:22;-webkit-text-stroke-width:0.45px;">Copy all as HAR</span>
</div></body></html>
